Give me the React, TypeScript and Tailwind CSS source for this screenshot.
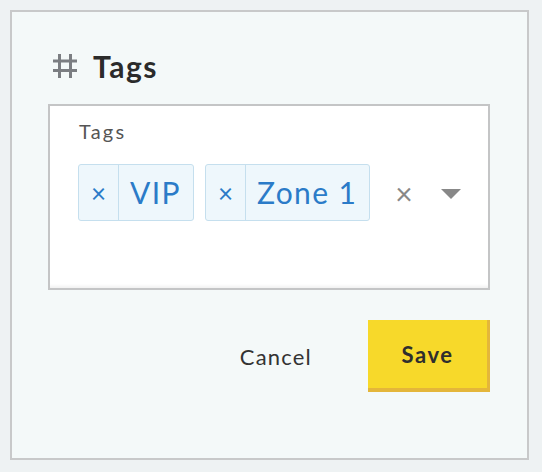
import { useState } from 'react';

type Tag = { id: string; label: string };

const font = { fontFamily: 'Lato, "Open Sans", sans-serif' };

const HashIcon = () => (
  <svg width="24" height="24" viewBox="0 0 24 24" className="shrink-0">
    <g stroke="#7b7e82" strokeWidth="3" fill="none">
      <line x1="6.5" y1="0" x2="6.5" y2="24" />
      <line x1="17.5" y1="0" x2="17.5" y2="24" />
      <line x1="0" y1="7" x2="24" y2="7" />
      <line x1="0" y1="16.5" x2="24" y2="16.5" />
    </g>
  </svg>
);

export default function App() {
  const [tags, setTags] = useState<Tag[]>([
    { id: 'vip', label: 'VIP' },
    { id: 'zone-1', label: 'Zone 1' }
  ]);

  return (
    <div className="w-[542px] h-[472px] bg-[#eef2f3] pt-[10px] pl-[10px]" style={font}>
      <div className="w-[519px] h-[450px] border-2 border-[#c8c9ca] bg-[#f4f9f9] pl-[36px] pt-[36px]">
        {/* Titulo */}
        <div className="flex items-center h-[36px] pl-[5px] gap-[16px]">
          <HashIcon />
          <h3 className="text-[30px] leading-[36px] font-bold tracking-[1.5px] text-[#2b2b2b]">Tags</h3>
        </div>

        {/* Campo de tags */}
        <div className="mt-[20px] w-[442px] h-[186px] border-2 border-[#c4c5c6] bg-white pl-[29px] pt-[13px] shadow-[inset_0_-4px_3px_-2px_rgba(0,0,0,0.06)]">
          <div className="text-[20px] leading-[24px] tracking-[2.2px] text-[#555]">Tags</div>
          <div className="mt-[21px] -ml-[1px] flex items-center">
            {tags.map(tag => (
              <div
                key={tag.id}
                className="flex h-[57px] mr-[11px] border border-[#c5dfee] bg-[#eef7fc] rounded-[3px] text-[#2b7bc8]"
              >
                <button
                  onClick={() => setTags(prev => prev.filter(t => t.id !== tag.id))}
                  className="w-[40px] flex items-center justify-center border-r border-[#c5dfee] text-[26px] leading-none"
                >
                  ×
                </button>
                <span className="pl-[11px] pr-[12px] flex items-center text-[30px] tracking-[1.4px]">{tag.label}</span>
              </div>
            ))}
            <span className="ml-[14px] text-[30px] leading-none text-[#888]">×</span>
            <svg width="20" height="10" viewBox="0 0 20 10" className="ml-[28px] mt-[2px]">
              <polygon points="0,0 20,0 10,10" fill="#888" />
            </svg>
          </div>
        </div>

        {/* Botoes */}
        <div className="mt-[30px] w-[442px] flex items-center justify-end gap-[56px]">
          <button className="text-[22px] tracking-[1.2px] text-[#333]">Cancel</button>
          <button className="w-[122px] h-[72px] bg-[#f7d92a] border-r-[3px] border-b-[4px] border-[#e4b63a] text-[22px] font-bold tracking-[1.5px] text-[#2e2e2e]">
            Save
          </button>
        </div>
      </div>
    </div>
  );
}
